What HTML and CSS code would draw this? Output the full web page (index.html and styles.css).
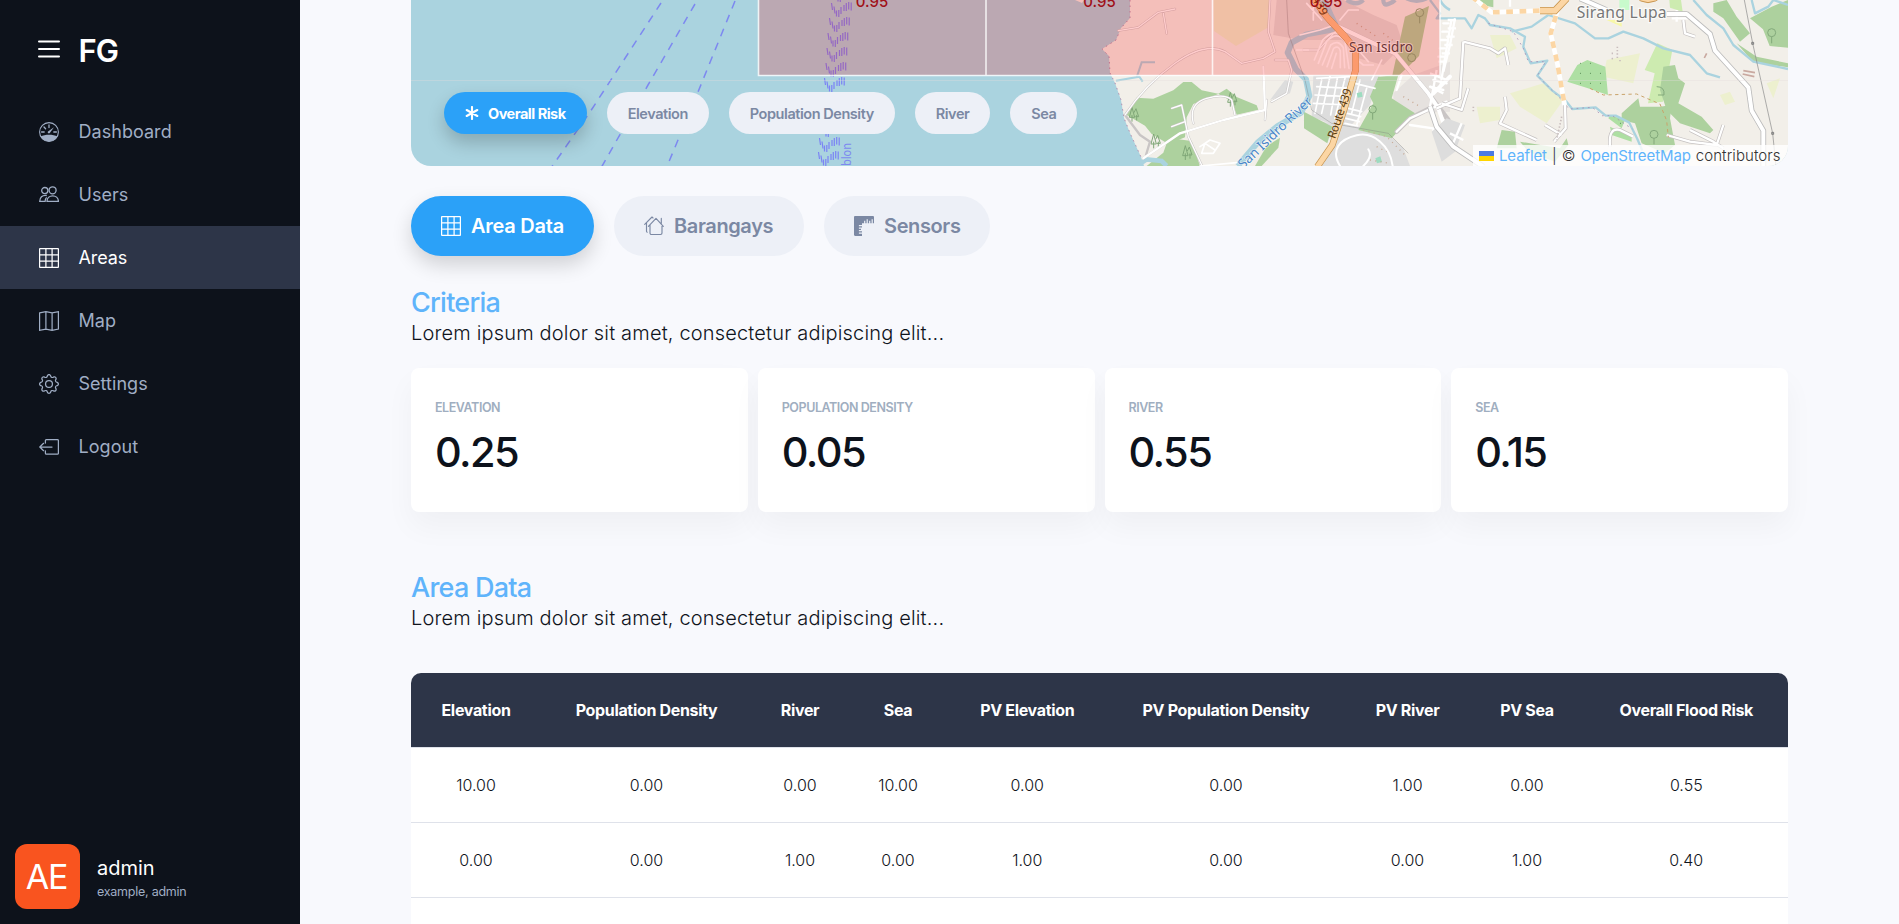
FILE: index.html
```html
<!DOCTYPE html>
<html lang="en">
<head>
<meta charset="utf-8">
<title>FG - Areas</title>
<link rel="stylesheet" href="styles.css">
</head>
<body>
<svg class="defs" width="0" height="0" aria-hidden="true">
  <symbol id="i-grid" viewBox="0 0 20 20"><path d="M1.2.6h17.6a.6.6 0 0 1 .6.6v17.6a.6.6 0 0 1-.6.6H1.2a.6.6 0 0 1-.6-.6V1.2a.6.6 0 0 1 .6-.6zM6.9.6v18.8M13.1.6v18.8M.6 6.9h18.8M.6 13.1h18.8" fill="none" stroke="currentColor" stroke-width="1.25"/></symbol>
</svg>
<div class="app">
  <aside class="sidebar">
    <div class="brand">
      <svg class="icon" viewBox="0 0 22 20"><path d="M1 2.5h20M1 10h20M1 17.5h20" stroke="currentColor" stroke-width="2" stroke-linecap="round"/></svg>
      <span class="brand-name">FG</span>
    </div>
    <nav class="nav">
      <a class="nav-item"><svg class="icon" viewBox="0 0 20 20"><circle cx="10" cy="10" r="9.4" fill="none" stroke="currentColor" stroke-width="1.1"/><path d="M1.5 14.6C6 12 14 12 18.500 14.600A9.800 9.800 0 0 1 1.500 14.600z" fill="currentColor"/><path d="M10 3v2.600M5 5l1.600 1.700M2.600 10h2.600M14.800 10h2.600" stroke="currentColor" stroke-width="1.300" stroke-linecap="round"/><path d="M15 5.300l-4.200 5.700a1.200 1.200 0 0 1-1.800-1.600z" fill="currentColor"/></svg><span>Dashboard</span></a>
      <a class="nav-item"><svg class="icon" viewBox="0 0 20 20" fill="none" stroke="currentColor" stroke-width="1.3"><circle cx="13.600" cy="5.300" r="3.500"/><path d="M8 16.400c0-7.400 11.400-7.400 11.400 0z"/><circle cx="5.800" cy="5.600" r="3.100"/><path d="M7.800 10.500C3 9.900.8 12.600.7 16.400h5.400c0-1.600.5-3 1.500-4"/></svg><span>Users</span></a>
      <a class="nav-item active"><svg class="icon"><use href="#i-grid"/></svg><span>Areas</span></a>
      <a class="nav-item"><svg class="icon" viewBox="0 0 20 20" fill="none" stroke="currentColor" stroke-width="1.2"><path d="M.6 1.900L6.900.7l6.200 1.200 6.300-1.200v17.400l-6.300 1.200-6.200-1.200-6.300 1.200zM6.900.7v17.400M13.100 1.900v17.400"/></svg><span>Map</span></a>
      <a class="nav-item"><svg class="icon" viewBox="0 0 16 16" fill="currentColor"><path d="M8 4.754a3.246 3.246 0 1 0 0 6.492 3.246 3.246 0 0 0 0-6.492zM5.754 8a2.246 2.246 0 1 1 4.492 0 2.246 2.246 0 0 1-4.492 0z"/><path d="M9.796 1.343c-.527-1.79-3.065-1.79-3.592 0l-.094.319a.873.873 0 0 1-1.255.52l-.292-.16c-1.64-.892-3.433.902-2.54 2.541l.159.292a.873.873 0 0 1-.52 1.255l-.319.094c-1.79.527-1.79 3.065 0 3.592l.319.094a.873.873 0 0 1 .52 1.255l-.16.292c-.892 1.64.901 3.434 2.541 2.54l.292-.159a.873.873 0 0 1 1.255.52l.094.319c.527 1.79 3.065 1.79 3.592 0l.094-.319a.873.873 0 0 1 1.255-.52l.292.16c1.64.893 3.434-.902 2.54-2.541l-.159-.292a.873.873 0 0 1 .52-1.255l.319-.094c1.79-.527 1.79-3.065 0-3.592l-.319-.094a.873.873 0 0 1-.52-1.255l.16-.292c.893-1.64-.902-3.433-2.541-2.54l-.292.159a.873.873 0 0 1-1.255-.52l-.094-.319zm-2.633.283c.246-.835 1.428-.835 1.674 0l.094.319a1.873 1.873 0 0 0 2.693 1.115l.291-.16c.764-.415 1.6.42 1.184 1.185l-.159.292a1.873 1.873 0 0 0 1.116 2.692l.318.094c.835.246.835 1.428 0 1.674l-.319.094a1.873 1.873 0 0 0-1.115 2.693l.16.291c.415.764-.42 1.6-1.185 1.184l-.291-.159a1.873 1.873 0 0 0-2.693 1.116l-.094.318c-.246.835-1.428.835-1.674 0l-.094-.319a1.873 1.873 0 0 0-2.692-1.115l-.292.16c-.764.415-1.6-.42-1.184-1.185l.159-.291A1.873 1.873 0 0 0 1.945 8.93l-.319-.094c-.835-.246-.835-1.428 0-1.674l.319-.094A1.873 1.873 0 0 0 3.06 4.377l-.16-.292c-.415-.764.42-1.6 1.185-1.184l.292.159a1.873 1.873 0 0 0 2.692-1.115l.094-.319z"/></svg><span>Settings</span></a>
      <a class="nav-item"><svg class="icon" viewBox="0 0 20 20" fill="none" stroke="currentColor" stroke-width="1.25" stroke-linecap="round" stroke-linejoin="round"><path d="M6.400 6V3.600a1 1 0 0 1 1-1h11a1 1 0 0 1 1 1v12.600a1 1 0 0 1-1 1h-11a1 1 0 0 1-1-1v-2.400M13 10H1M4.600 6.300L.8 10l3.800 3.700"/></svg><span>Logout</span></a>
    </nav>
    <div class="profile">
      <div class="avatar">AE</div>
      <div class="who"><div class="who-name">admin</div><div class="who-role">example, admin</div></div>
    </div>
  </aside>

  <main class="main">
    <section class="map">
      <svg class="map-canvas" viewBox="411 0 1377 166">
        <defs>
          <g id="wave" stroke="#7b83f5" stroke-width="1.200" fill="none"><path d="M0 0l1 7M2.500 3.500l1 7M5 7.500v6M7.300 7v7M9.500 4v7M12.500 2v6M14.800 0v8M17.200-1v7.500M19.700-.5v8"/></g>
          <g id="tree" stroke="#7fa777" stroke-width="3" fill="none"><path d="M-12 12L-4-18 4 12zM-4 5v20M2-2L8-14 16 10H6M10 5v16"/></g>
        </defs>
        <rect x="411" y="0" width="1377" height="166" fill="#aad3df"/>
        <g stroke="#7d88f0" stroke-width="1.500" fill="none" stroke-dasharray="8 7">
          <path d="M661 3L590 112 551 168"/><path d="M695 4L648 85 601 168"/><path d="M735 1L698 92 668 164"/>
        </g>
        <use href="#wave" x="833" y="-12"/><use href="#wave" x="831.500" y="3"/><use href="#wave" x="829.500" y="18"/><use href="#wave" x="828" y="33"/><use href="#wave" x="827" y="48"/><use href="#wave" x="826" y="63"/><use href="#wave" x="824.500" y="78"/><use href="#wave" x="823" y="93"/><use href="#wave" x="822" y="108"/><use href="#wave" x="821" y="123"/><use href="#wave" x="819.500" y="138"/><use href="#wave" x="818.500" y="152"/>
        <text class="map-text ferry" transform="translate(851 166) rotate(-90)" textLength="23" lengthAdjust="spacingAndGlyphs">blon</text>
        <path d="M1130 0L1130 18 1121 28 1116 40 1102 49 1109 56 1110 73 1115 83 1121 100 1124 118 1130 133 1141 157 1144 166H1788V0zM1075 0h9l-2 3z" fill="#f2efe9"/>
        <path d="M1130 0L1130 18 1121 28 1116 40 1102 49 1109 56 1110 73 1115 83 1121 100 1124 118 1130 133 1141 157" fill="none" stroke="#b48fb0" stroke-width="1" stroke-dasharray="1.500 4"/>

        <g transform="translate(1100 0) scale(.33333)">
          <path d="M340 0h170l-2 80-100 58-66-45z" fill="#edf0cf"/>
          <path d="M530 0h200l90 45 70 30 20 60-60 60-75-20-50-55-120 0-85-15z" fill="#e1dcd9"/>
          <path d="M640 225l120 0 80 0-30 90-70 75-105-40z" fill="#dddddd"/>
          <path d="M880 280l60-55 110-40v150l-110 5-60-30z" fill="#e6e2df"/>
          <path d="M610 360l90 10 150 20 60 55 20 53H650l60-70z" fill="#dedede"/>
          <path d="M555 240l25 5-10 35-60 20z" fill="#ddd"/>
          <g fill="#add19e">
            <path d="M80 345l30-52 50 3 60-25 30-25 25 0 30 25 50 10 25-15 30 25 60 25 5 13-65 15-15-40-40-22-75 30-20 40-5 60-50 20-50-30-20-25z"/>
            <path d="M200 430l35-12 40 5 25 75H140l50-40z"/>
            <path d="M465 498l35-60 40-25-5 30-50 55z"/>
            <path d="M612 335l85 45-15 50-70-45z"/>
            <path d="M835 230l60-5-20 70 70 45-70 75-100-25 45-80-10-20z"/>
            <path d="M915 50l72-32-30 150-30 30-30 28h-20z"/>
          </g>
          <use href="#tree" x="100" y="340"/><use href="#tree" x="165" y="420"/><use href="#tree" x="260" y="455"/><use href="#tree" x="395" y="295"/>
          <g stroke="#7fa777" stroke-width="3" fill="none"><circle cx="818" cy="328" r="11"/><path d="M818 339v20"/><circle cx="959" cy="38" r="12"/><path d="M959 50v20"/><circle cx="935" cy="173" r="12"/></g>
          <g fill="none" stroke="#aad3df">
            <path d="M48 242l70-12 10 15M110 232l15-45h40" stroke-width="6"/>
            <path d="M700 88l-80 15-45 25-12 30 25 50 30 30 10 50-25 50-70 40-60 50-60 70" stroke-width="18" stroke-linejoin="round"/>
            <path d="M670 0l20 45 22 45" stroke-width="22"/>
            <path d="M740 0q30 20 50 0M850 0q0 18 15 12t20-12M920-5q30 15 60 0" stroke-width="13"/>
            <path d="M1020 0q10 20 30 30" stroke-width="8"/>
            <path d="M110 498l30-20 45 5 15 15" stroke-width="14"/>
          </g>
          <g fill="none" stroke="#c9c5c5" stroke-linejoin="round" stroke-linecap="round">
            <path d="M75 345q60-90 150-155t150-35l50 35 65-15 35-20-20-60 5-95M130 475l110-75 130-40 125-30-5-130M75 345l45 60 30 20-12 40M215 325l30-10 20 95 40 85M215 380l40-15M280 370q-15-60 40-75t75 5l10 45M500 300l-5 60M515 305l45-25 15-70-10-30h-40M55 92l60-10 60-45 50-10M190 40l10 60M610 150h45l60-65" stroke-width="7"/>
            <path d="M715 80l170 80 100 120 60 80M890 395l40-40 70-35" stroke-width="14"/>
          </g>
          <g fill="none" stroke="#fff" stroke-linejoin="round" stroke-linecap="round">
            <path d="M75 345q60-90 150-155t150-35l50 35 65-15 35-20-20-60 5-95M215 325l30-10 20 95 40 85M215 380l40-15M280 370q-15-60 40-75t75 5l10 45M500 300l-5 60M515 305l45-25 15-70-10-30h-40M55 92l60-10 60-45 50-10M190 40l10 60M610 150h45l60-65" stroke-width="4"/>
            <path d="M130 475l110-75 130-40 125-30-5-130" stroke-width="7"/>
            <path d="M715 80l170 80 100 120 30 45 35 100M1000 280l50-50" stroke-width="12"/><path d="M890 270l15-45M890 395l40-40 110-50M1000 390l45-20M930 375l70 10" stroke-width="7"/>
            <path d="M655 190l25-65q30-35 55 0l12 80M667 195l25-60q22-18 38 8l4 60M681 200l20-55q15-10 20 8v50M695 205l14-45M643 180l25-60q40-40 70-5M650 260l105 5M645 285l105 5M640 310l105 5M665 240l-20 100M690 230l-25 110M712 235l-20 110M735 235l-30 120M650 235l100-5M745 325l40 10M742 340l40 10M738 355l40 10M735 370l38 8M780 240l-25 100M800 265l-30 110M765 250l60 15M760 170l30 25 30 0M775 150l30 35M845 180l-30 60M600 105l60-15 45-15M620 10l45 50M640 0v60M720 60l25-30 30 0M590 150h35" stroke-width="5"/>
            <path d="M720 498c-30-50 0-80 50-92s100 30 108 92M790 498q30-30 15-50" stroke-width="6"/>
            <path d="M1020 265l10-60 10-60 15-90M1045 70h-15M1042 95h-15M1038 120h-15M1034 145h-15M1030 170h-15M1000 240l40 10M990 260l40 10" stroke-width="7"/>
            <path d="M300 440l30-20 30 10-20 30-35 0 10-30 30 20M300 498l110-10" stroke-width="5"/>
          </g>
          <path d="M560 0l5 100 50 140 20 90 60 40 170 30 60 60" fill="none" stroke="#777" stroke-width="1.500" opacity=".7"/>
          <path d="M640-5l40 55 55 60 32 40 0 60-35 120-35 105-45 65" fill="none" stroke="#c89651" stroke-width="20" stroke-linejoin="round"/>
          <path d="M640-5l40 55 55 60 32 40 0 60-35 120-35 105-45 65" fill="none" stroke="#fcd6a4" stroke-width="16" stroke-linejoin="round"/>
          <path d="M640-5l40 55 55 60 32 40 0 60-4 14" fill="none" stroke="#fcc189" stroke-width="16" stroke-linejoin="round"/>
          <path d="M770 280l15-5 3 15-15 3zM826 475l15-6 5 17-15 4z" fill="#9ddcc0"/>
          <path d="M790 390l70 20 60 60M830 440l30 15M810 480l60 10M770 70l60 40M850 100l40 30M910 290l50 30" fill="none" stroke="#c7a994" stroke-width="4" stroke-dasharray="3 13"/>
          <g class="map-text" font-size="40">
            <text class="river" transform="translate(430 508) rotate(-44)" textLength="290">San Isidro River</text>
            <text class="road" transform="translate(705 418) rotate(-71)" textLength="156">Route 439</text>
            <text class="road" transform="translate(636 -4) rotate(62)">439</text>
          </g>
        </g>

        <g transform="translate(1430 0) scale(.33333)">
          <g fill="#edf0cf"><path d="M180 105h60l20 40-60 30zM240 280l100-30 60 50-50 70-80-50zM530 180l100-20-20 90-90-20zM140 320l70 0 0 40-60 10zM870 285l30-10 15 30-30 10zM1010 250l40-15-20 60z"/></g><path d="M530 60h45v20z" fill="#f7f7a8"/>
          <path d="M682 130l45 20-28 155-45 5 20-90-30-10z" fill="#cdebb0"/><path d="M718 0h35l5 35-38-12z" fill="#cdebb0"/>
          <path d="M412 245l30-50 30-15 54 20 8 85-60-20zM540 345l45 15-10 25-40-30zM540 380l65 30v15l-60-20z" fill="#aedfa3"/><path d="M568 0h30v30h-30z" fill="#c8facc"/>
          <g fill="#add19e">
            <path d="M700 200l35-5 10 40 20 15-20 60 70 40 35 40-10 10-90-30-40-40-20-60z"/>
            <path d="M575 340l50-45 5 25 60 0 35-5-5 40 15 80-30 25-70-30-20-60-40-10z"/>
            <path d="M850 10l40-10 30 50 40 50-30 25-50-70-30-20zM960 55l65-35 49-20v143l-55-5-20-50zM920 130l60 40 95 20v12l-105-15z"/>
            <path d="M215 390l40 5 5 50h-60zM270 425l120 20 20-30 5 20-40 50-80-30zM140 0h50v22l-50-10z"/>
          </g>
          <path d="M50 355l55 20-30 80-40 30-30-90z" fill="#ddd"/>
          <g fill="none" stroke="#aad3df" stroke-width="7" stroke-linejoin="round">
            <path d="M0 0l30 40-10 15 85 0 20 30 20-40 20 10 15 20 60 10 45 25-5 30 22 50 50-8-30 45 45 45 40 30 20 25 70-5 30 25 30 0 40 20 25 50 15 35"/>
            <path d="M245 95l60-15 50-35 80 25 60 45 40 0 45-20 60 20 60 30 80 20 50 55 40 12"/>
            <path d="M790 0l40 45 50 40 30 50 60 50 104 22M965 0l10 40 40-20 15-20 44 15"/>
          </g>
          <path d="M175 70l75 25 30 50 15 40 52 0-25 42 75 75 20 25 70-5 30 25 30 0 60 40" fill="none" stroke="#a58bb5" stroke-width="2.500" stroke-dasharray="5 12"/>
          <g fill="none" stroke="#c4c0c0" stroke-width="11" stroke-linejoin="round"><path d="M100 125l80 20 25 15 20-15 10 50M100 125l-10 170-70 30M115 265l-20 65-60-20M225 290l5 40-20 40 110 50M405 315l2 70-35 40M345 375l50 30M540 440q-5-60 30-50l40 20M710 405l70 20 80 10 20-60M780 390l70 35 30 20M760 60l5 40 30 10"/></g>
          <g fill="none" stroke="#fff" stroke-width="7" stroke-linejoin="round"><path d="M100 125l80 20 25 15 20-15 10 50M100 125l-10 170-70 30M115 265l-20 65-60-20M225 290l5 40-20 40 110 50M405 315l2 70-35 40M345 375l50 30M540 440q-5-60 30-50l40 20M710 405l70 20 80 10 20-60M780 390l70 35 30 20M760 60l5 40 30 10M240 0v20M95 370l-30 70M60 400l40 20M740 30v35M725 55h50"/></g>
          <path d="M450-5l80 35M710 42h60l70 60 15 50 100 110 10 70 35 60v120M0 320l20 60 50 60 90 60" fill="none" stroke="#bbb" stroke-width="17" stroke-linejoin="round"/>
          <path d="M450-5l80 35M710 42h60l70 60 15 50 100 110 10 70 35 60v120M0 320l20 60 50 60 90 60" fill="none" stroke="#fff" stroke-width="12" stroke-linejoin="round"/>
          <path d="M75 55l-15 80-20 80M78 60h-25M78 85h-25M74 110h-25M68 135h-25M60 160h-25M50 185h-25M0 220l50 20-50 50M0 260l40 20M20 210l-20 110" fill="none" stroke="#fff" stroke-width="7"/>
          <path d="M125-10l60 47 145-5 50 8-18 60 20 90 22 125" fill="none" stroke="#fff" stroke-width="14"/>
          <path d="M125-10l60 47 145-5 50 8-18 60 20 90 22 125" fill="none" stroke="#fcd6a4" stroke-width="14" stroke-dasharray="20 20"/>
          <path d="M330 32h45L410-5" fill="none" stroke="#c89651" stroke-width="22"/><path d="M330 32h45L410-5" fill="none" stroke="#fcd6a4" stroke-width="17"/>
          <path d="M612 -12q40 40 88 0" fill="#fcd6a4" stroke="#c89651" stroke-width="3"/>
          <path d="M480 265l40 20 100-3 70 30 20 50 5 50" fill="none" stroke="#c9a36a" stroke-width="3" stroke-dasharray="10 10"/>
          <path d="M943 0l25 130 60 270 10 98" fill="none" stroke="#888" stroke-width="2"/><path d="M965 127h6v6h-6zM1025 397h6v6h-6z" fill="#aaa" stroke="#666" stroke-width="2"/>
          <path d="M450 190h2M480 190h2M450 220h2M480 220h2M510 220h2M450 250h2M480 250h2M510 250h2M570 370h2" stroke="#356b35" stroke-width="3"/>
          <path d="M545 160h8M562 140v35M570 180v8M545 175l6 3M130 320v20M395 350l-15 70" stroke="#c9bdbd" stroke-width="5" stroke-dasharray="4 6"/>
          <path d="M940 212l35 6M938 222l35 8M830 160l-7 14" stroke="#c9a9a0" stroke-width="5"/>
          <g fill="none" stroke="#83a97a" stroke-width="3"><circle cx="1025" cy="98" r="12"/><path d="M1025 110v20"/><circle cx="672" cy="403" r="12"/><path d="M672 415v18M680 260q25 0 22 25h-18"/></g>
          <text class="map-text village" x="440" y="55" textLength="270">Sirang Lupa</text>
        </g>

        <text class="map-text town" x="1349" y="52" textLength="64">San Isidro</text>
        <path d="M758.500-2H1440V75H758.500z" fill="rgba(255,0,0,.2)"/>
        <path d="M758.500-2V75.500H1440V-2M986-2V75M1212.500-2V75" fill="none" stroke="#fff" stroke-opacity=".8" stroke-width="1.600"/>
        <path d="M411 80.500H1788" stroke="#e6dede" stroke-opacity=".35"/>
        <g class="risk"><text x="872" y="7">0.95</text><text x="1099.500" y="7">0.95</text><text x="1326" y="7">0.95</text></g>
      </svg>
      <div class="filters">
        <button class="chip active"><svg class="chip-icon" viewBox="0 0 14 14"><path d="M7 1v12M1.700 4l10.600 6M12.300 4L1.700 10" stroke="currentColor" stroke-width="2.100" stroke-linecap="round"/></svg><span>Overall Risk</span></button>
        <button class="chip">Elevation</button>
        <button class="chip">Population Density</button>
        <button class="chip">River</button>
        <button class="chip">Sea</button>
      </div>
      <div class="attribution"><svg class="flag" viewBox="0 0 15 10"><path fill="#4c7be1" d="M0 0h15v5H0z"/><path fill="#ffd500" d="M0 5h15v5H0z"/></svg><a>Leaflet</a><span class="bar">|</span><span>©</span><a class="osm">OpenStreetMap</a><span class="contrib">contributors</span></div>
    </section>

    <div class="tabs">
      <button class="tab tab-area active"><svg class="icon"><use href="#i-grid"/></svg><span>Area Data</span></button>
      <button class="tab tab-brgy"><svg class="icon" viewBox="0 0 20 20" fill="none" stroke="currentColor" stroke-width="1.150" stroke-linecap="round" stroke-linejoin="round"><path d="M4.400 10.300L12 2.400l7.300 7.900M6 8.800v8.300a1.400 1.400 0 0 0 1.400 1.400h9.200a1.400 1.400 0 0 0 1.400-1.400V8.800M17.300 7.500V2.400M.7 8.300L8 1l1 1M2.500 6.800v8.400a1 1 0 0 0 .8 1"/></svg><span>Barangays</span></button>
      <button class="tab tab-sens"><svg class="icon" viewBox="0 0 20 20"><path fill="currentColor" d="M1.200 0h17.600c.7 0 1.200.5 1.200 1.200V7.300h-1.200V3.200h-1.200v4.100h-1.300V4.800h-1.200v2.500h-1.300V3.200h-1.200v4.100h-1.300V4.800h-1.200v2.500H8V9H4.900v1.200H8v1.300H4.900v1.200H7v1.300H4.900v1.200H8v1.300H4.900v1.200H8V20H1.200C.5 20 0 19.500 0 18.800V1.200C0 .5.5 0 1.200 0z"/></svg><span>Sensors</span></button>
    </div>

    <section class="criteria">
      <h2>Criteria</h2>
      <p class="lead">Lorem ipsum dolor sit amet, consectetur adipiscing elit...</p>
      <div class="cards">
        <article class="card"><div class="label">ELEVATION</div><div class="value">0.25</div></article>
        <article class="card"><div class="label">POPULATION DENSITY</div><div class="value">0.05</div></article>
        <article class="card"><div class="label">RIVER</div><div class="value">0.55</div></article>
        <article class="card"><div class="label">SEA</div><div class="value">0.15</div></article>
      </div>
    </section>

    <section class="area">
      <h2>Area Data</h2>
      <p class="lead">Lorem ipsum dolor sit amet, consectetur adipiscing elit...</p>
      <div class="table-wrap">
        <table>
          <colgroup><col class="c1"><col class="c2"><col class="c3"><col class="c4"><col class="c5"><col class="c6"><col class="c7"><col class="c8"><col class="c9"></colgroup>
          <thead><tr><th>Elevation</th><th>Population Density</th><th>River</th><th>Sea</th><th>PV Elevation</th><th>PV Population Density</th><th>PV River</th><th>PV Sea</th><th>Overall Flood Risk</th></tr></thead>
          <tbody>
            <tr><td>10.00</td><td>0.00</td><td>0.00</td><td>10.00</td><td>0.00</td><td>0.00</td><td>1.00</td><td>0.00</td><td>0.55</td></tr>
            <tr><td>0.00</td><td>0.00</td><td>1.00</td><td>0.00</td><td>1.00</td><td>0.00</td><td>0.00</td><td>1.00</td><td>0.40</td></tr>
            <tr><td></td><td></td><td></td><td></td><td></td><td></td><td></td><td></td><td></td></tr>
          </tbody>
        </table>
      </div>
    </section>
  </main>
</div>
</body>
</html>
```
FILE: styles.css
```css
* { box-sizing: border-box; }
html, body { margin: 0; height: 100%; overflow: hidden; }
body { font-family: Inter, "Liberation Sans", sans-serif; font-weight: 300; color: #10141c; background: #f8f9fd; }
h2, p { margin: 0; }
button { font: inherit; border: 0; margin: 0; }
.defs { position: absolute; }
.app { display: flex; height: 924px; overflow: hidden; }

.sidebar { width: 300px; flex: none; background: #0d121b; display: flex; flex-direction: column; color: #a0aec5; }
.icon { width: 20px; height: 20px; flex: none; display: block; }
.brand { height: 100px; display: flex; align-items: center; gap: 18.500px; padding: 0 0 0 38px; color: #fff; }
.brand .icon { width: 22px; margin-bottom: 3px; }
.brand-name { font-size: 31px; font-weight: 600; letter-spacing: -1px; }
.nav-item { height: 63px; display: flex; align-items: center; gap: 19.500px; padding-left: 39px; font-size: 18px; font-weight: 400; letter-spacing: .04px; }
.nav-item.active { background: #2d3548; color: #fff; letter-spacing: -.1px; }
.profile { margin-top: auto; padding: 0 15px 15px; display: flex; align-items: center; gap: 17px; }
.avatar { width: 65px; height: 65px; border-radius: 12px; background: #f9541f; color: #fff; display: flex; align-items: center; justify-content: center; font-size: 34px; font-weight: 400; letter-spacing: -1.200px; padding-right: 2px; }
.who { padding-top: 4px; }
.who-name { font-size: 20px; line-height: 26px; font-weight: 400; color: #fff; }
.who-role { font-size: 12.500px; line-height: 21px; font-weight: 400; letter-spacing: -.25px; }

.main { flex: 1; min-width: 0; padding: 0 111px; }
.map { position: relative; height: 166px; border-radius: 0 0 20px 20px; overflow: hidden; }
.map-canvas { display: block; width: 1377px; height: 166px; }
.map-text { font-family: "Noto Sans", sans-serif; font-weight: 400; }
.ferry { font-size: 13px; fill: #7d88f0; }
.river { fill: #4a87c9; stroke: #fff; stroke-width: 4px; stroke-opacity: .6; paint-order: stroke; }
.road { font-size: 35px; fill: #5c3d10; }
.village { font-size: 47px; fill: #777; stroke: #fff; stroke-width: 7px; stroke-opacity: .7; paint-order: stroke; }
.town { font-size: 13.500px; fill: #444; stroke: #fff; stroke-width: 2px; stroke-opacity: .7; paint-order: stroke; }
.risk { font-size: 15px; font-weight: 500; fill: #a01018; text-anchor: middle; }
.filters { position: absolute; left: 33px; top: 92px; display: flex; gap: 20px; }
.chip { height: 42px; padding: 0 21px; border-radius: 21px; background: #edf0f7; color: #7b88a3; font-size: 14.500px; font-weight: 600; letter-spacing: -.45px; display: flex; align-items: center; gap: 9px; white-space: nowrap; }
.chip.active { background: #2ba1f8; color: #fff; font-weight: 700; letter-spacing: -.5px; box-shadow: 0 9px 18px rgba(0,0,0,.2); }
.chip-icon { width: 14px; height: 14px; }
.attribution { position: absolute; right: 0; bottom: 0; height: 21px; width: 315px; padding: 0 6px; display: flex; align-items: center; gap: 5px; font-size: 15px; font-weight: 300; letter-spacing: .08px; color: #333; background: rgba(255,255,255,.8); white-space: nowrap; }
.attribution a { color: #5fb4fb; font-weight: 400; letter-spacing: -.11px; }
.flag { width: 15px; height: 10px; }

.tabs { display: flex; gap: 20px; margin-top: 30px; }
.tab { height: 60px; border-radius: 30px; padding: 0 0 0 30px; display: flex; align-items: center; gap: 10px; background: #edf0f7; color: #7b88a3; font-size: 20px; font-weight: 600; letter-spacing: -.38px; white-space: nowrap; }
.tab-area { width: 183px; }
.tab-brgy { width: 190px; }
.tab-sens { width: 166px; }
.tab.active { background: #2ba1f8; color: #fff; letter-spacing: -.25px; box-shadow: 0 9px 20px rgba(0,0,0,.16); }

h2 { font-size: 27px; line-height: 33px; font-weight: 550; letter-spacing: -.75px; color: #5fb4fb; }
.lead { font-size: 20px; line-height: 28px; font-weight: 300; letter-spacing: .17px; }
.criteria { margin-top: 30px; }
.cards { display: grid; grid-template-columns: repeat(4, 1fr); gap: 10px; margin-top: 21px; }
.card { height: 144px; border-radius: 8px; background: #fff; padding: 30px 24px; box-shadow: 0 15px 30px rgba(0,0,0,.04); }
.label { font-size: 12.500px; line-height: 20px; font-weight: 600; letter-spacing: -.45px; color: #a0aec0; }
.value { font-size: 41.500px; line-height: 52px; margin-top: 8px; font-weight: 500; letter-spacing: -1.600px; color: #0d121b; }
.area { margin-top: 59px; }
.table-wrap { margin-top: 41px; border-radius: 10px 10px 0 0; overflow: hidden; background: #fff; }
table { width: 1377px; table-layout: fixed; border-collapse: separate; border-spacing: 0; text-align: center; font-size: 16px; }
.c1 { width: 130px; } .c2 { width: 211px; } .c3 { width: 96px; } .c4 { width: 100px; } .c5 { width: 158.500px; }
.c6 { width: 239px; } .c7 { width: 124px; } .c8 { width: 115px; } .c9 { width: 203.500px; }
th, td { padding: 0; height: 75px; border-bottom: 1px solid #dfe2ea; white-space: nowrap; }
th { background: #2d3548; color: #fff; font-weight: 700; letter-spacing: -.33px; }
```
